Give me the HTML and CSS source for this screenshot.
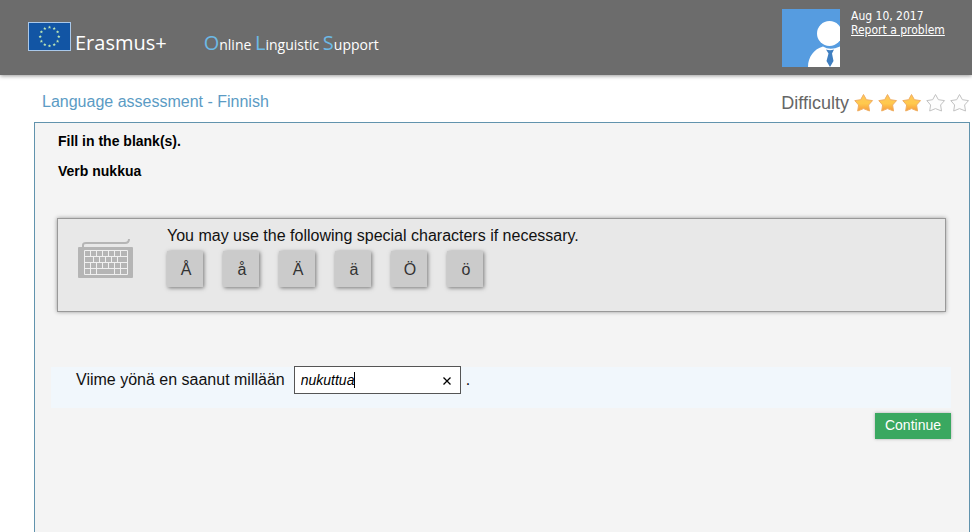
FILE: index.html
```html
<!DOCTYPE html>
<html lang="en">
<head>
  <meta charset="UTF-8">
  <title>Online Linguistic Support</title>
  <link rel="stylesheet" href="styles.css">
</head>
<body>

  <header class="top-bar">
    <svg class="flag" viewBox="0 0 43 29">
      <defs>
        <path id="eu-star" fill="#b9e3b4" d="M0-1.6 .5-.5 1.6-.4 .8 .4 1 1.5 0 .9-1 1.5-.8 .4-1.6-.4-.5-.5z"/>
      </defs>
      <rect x=".5" y=".5" width="42" height="28" fill="#1255a4" stroke="#a9c8ea"/>
      <use href="#eu-star" x="21.5" y="5.2"/>
      <use href="#eu-star" x="26.2" y="6.4"/>
      <use href="#eu-star" x="29.6" y="9.8"/>
      <use href="#eu-star" x="30.8" y="14.5"/>
      <use href="#eu-star" x="29.6" y="19.2"/>
      <use href="#eu-star" x="26.2" y="22.6"/>
      <use href="#eu-star" x="21.5" y="23.8"/>
      <use href="#eu-star" x="16.8" y="22.6"/>
      <use href="#eu-star" x="13.4" y="19.2"/>
      <use href="#eu-star" x="12.2" y="14.5"/>
      <use href="#eu-star" x="13.4" y="9.8"/>
      <use href="#eu-star" x="16.8" y="6.4"/>
    </svg>
    <span class="brand">Erasmus+</span>
    <span class="site-name"><b>O</b>nline <b>L</b>inguistic <b>S</b>upport</span>

    <div class="account">
      <svg class="avatar" viewBox="0 0 58 58">
        <rect width="58" height="58" fill="#569ce0"/>
        <circle cx="47.500" cy="24.500" r="12.500" fill="#fff"/>
        <path fill="#fff" d="M26 58C26 48 32 40 41 37.500Q48 42 58 37.500V58z"/>
        <path fill="#3f7fc1" d="M44 40.500Q48 42 52 40.500L50 44.500 51.500 52 48 58 44.500 52 46.500 44.500z"/>
      </svg>
      <div class="account-info">
        <span>Aug 10, 2017</span>
        <a href="#">Report a problem</a>
      </div>
    </div>
  </header>

  <main>
    <div class="title-row">
      <h1>Language assessment - Finnish</h1>
      <div class="difficulty">
        <span>Difficulty</span>
        <svg class="stars" viewBox="0 0 116 20">
          <defs>
            <linearGradient id="gold" x1="0" y1="0" x2="0" y2="1">
              <stop offset="0" stop-color="#ffc85a"/>
              <stop offset=".55" stop-color="#ffc94d"/>
              <stop offset="1" stop-color="#f79a3c"/>
            </linearGradient>
            <path id="star" stroke-linejoin="round" d="M9.500 1.500 12.400 6.700 18.500 7.600 14.600 12 15.500 18 9.500 15.600 3.700 18 4.600 12 .8 7.600 6.700 6.700z"/>
          </defs>
          <g fill="url(#gold)" stroke="#f0ae62">
            <use href="#star"/>
            <use href="#star" x="24"/>
            <use href="#star" x="48"/>
          </g>
          <g fill="#fdfdfd" stroke="#c2c2c2">
            <use href="#star" x="72"/>
            <use href="#star" x="96"/>
          </g>
        </svg>
      </div>
    </div>

    <form class="panel" onsubmit="return false">
      <h2>Fill in the blank(s).</h2>
      <h2>Verb nukkua</h2>

      <!-- Special characters -->
      <section class="keyboard-box">
        <svg class="keyboard" viewBox="0 0 56 40">
          <path d="M5 8V6Q5 4 8 4H47Q51 4 51 0" fill="none" stroke="#b5b5b5" stroke-width="2"/>
          <rect y="8" width="55" height="31" rx="1" fill="#b5b5b5"/>
          <path fill="none" stroke="#f0f0f0" d="M6.500 11.500H49.500V35.500H6.500zM6.500 17.500H49.500M6.500 23.500H49.500M6.500 29.500H49.500M12.500 11.500V17.500M18.500 11.500V17.500M24.500 11.500V17.500M30.500 11.500V17.500M36.500 11.500V17.500M42.500 11.500V17.500M15.500 17.500V23.500M21.500 17.500V23.500M27.500 17.500V23.500M33.500 17.500V23.500M39.500 17.500V23.500M12.500 23.500V29.500M18.500 23.500V29.500M24.500 23.500V29.500M30.500 23.500V29.500M36.500 23.500V29.500M42.500 23.500V29.500M12.500 29.500V35.500M18.500 29.500V35.500M36.500 29.500V35.500M42.500 29.500V35.500"/>
        </svg>
        <div>
          <p>You may use the following special characters if necessary.</p>
          <div class="keys">
            <button type="button">Å</button>
            <button type="button">å</button>
            <button type="button">Ä</button>
            <button type="button">ä</button>
            <button type="button">Ö</button>
            <button type="button">ö</button>
          </div>
        </div>
      </section>

      <!-- Question -->
      <div class="question">
        <label for="answer">Viime yönä en saanut millään</label>
        <div class="answer-box">
          <input type="text" id="answer" value="nukuttua" autocomplete="off" spellcheck="false">
          <span class="caret"></span>
          <button type="button" class="clear" aria-label="Clear">
            <svg viewBox="0 0 8 8"><path d="M.5 .5 7.500 7.500M7.500 .5 .5 7.500" stroke="#000" stroke-width="1.300"/></svg>
          </button>
        </div>
        <span>.</span>
      </div>

      <button type="submit" class="continue">Continue</button>
    </form>
  </main>

  <script>
    const answer = document.getElementById('answer');

    document.querySelectorAll('.keys button').forEach(key => {
      key.addEventListener('click', () => {
        answer.value += key.textContent;
        answer.focus();
      });
    });

    document.querySelector('.clear').addEventListener('click', () => {
      answer.value = '';
      answer.focus();
    });

    // The real caret takes over once the field is in use
    answer.addEventListener('focus', () => {
      document.querySelector('.caret').hidden = true;
    });
  </script>

</body>
</html>
```
FILE: styles.css
```css
* {
  box-sizing: border-box;
}

body {
  margin: 0;
  min-height: 100vh;
  display: flex;
  flex-direction: column;
  font-family: "Liberation Sans", Arial, sans-serif;
  font-size: 16px;
  color: #111;
  background: white;
}

.top-bar {
  display: flex;
  align-items: flex-start;
  height: 75px;
  padding-left: 28px;
  color: white;
  background: #6c6c6c;
  box-shadow: 0 1px 4px #999;
}

.flag {
  width: 43px;
  height: 29px;
  margin-top: 22px;
}

.brand {
  margin: 28px 0 0 4px;
  font: 20px/30px "Open Sans", sans-serif;
}

.site-name {
  margin: 28px 0 0 37px;
  font: 14px/30px "Open Sans", sans-serif;
}

.site-name b {
  font-size: 20px;
  font-weight: normal;
  color: #6cb9e6;
}

.account {
  display: flex;
  gap: 11px;
  width: 190px;
  margin: 9px 0 0 auto;
}

.avatar {
  width: 58px;
  height: 58px;
}

.account-info {
  display: flex;
  flex-direction: column;
  font: 12px/14px "DejaVu Sans Condensed", sans-serif;
}

.account-info a {
  color: white;
}

main {
  flex: 1;
  display: flex;
  flex-direction: column;
  padding: 16px 2px 0 34px;
}

.title-row {
  display: flex;
  justify-content: space-between;
  height: 31px;
  padding-left: 8px;
}

h1 {
  margin: 0;
  font-size: 16px;
  line-height: 22px;
  font-weight: normal;
  color: #5b9bc4;
}

.difficulty {
  display: flex;
  gap: 5px;
  font-size: 18px;
  line-height: 24px;
  color: #666;
}

.stars {
  width: 116px;
  height: 20px;
  margin-top: 2px;
}

.panel {
  flex: 1;
  display: flex;
  flex-direction: column;
  padding: 8px 18px 24px 16px;
  background: #f4f4f4;
  border: 1px solid #6193ad;
  border-bottom: none;
}

h2 {
  margin: 0 0 10px 7px;
  font-size: 14px;
  line-height: 20px;
  color: black;
}

.keyboard-box {
  display: flex;
  gap: 33px;
  margin: 27px 5px 0 6px;
  min-height: 94px;
  padding: 8px 20px;
  background: #e8e8e8;
  border: 1px solid #999;
  box-shadow: 0 0 4px #999;
}

.keyboard {
  width: 56px;
  height: 40px;
  margin-top: 12px;
}

.keyboard-box p {
  margin: 0 0 6px;
  line-height: 18px;
}

.keys {
  display: flex;
  gap: 20px;
}

.keys button {
  width: 36px;
  height: 36px;
  padding: 2px 0 0 2px;
  font: inherit;
  color: #333;
  background: #cbcbcb;
  border: none;
  box-shadow: 1px 1px 4px #777;
}

.question {
  display: flex;
  height: 41px;
  margin-top: 55px;
  padding-left: 25px;
  line-height: 26px;
  background: #f1f7fc;
}

.answer-box {
  position: relative;
  margin: -1px 5px 0 9px;
}

.answer-box input {
  width: 167px;
  height: 28px;
  padding: 0 24px 0 6px;
  font: italic 14px "Liberation Sans", Arial, sans-serif;
  color: black;
  background: white;
  border: 1px solid #555;
  border-radius: 0;
}

.caret {
  position: absolute;
  top: 6px;
  left: 60px;
  width: 1px;
  height: 16px;
  background: black;
}

.clear {
  position: absolute;
  top: 7px;
  right: 6px;
  display: flex;
  align-items: center;
  justify-content: center;
  width: 16px;
  height: 16px;
  padding: 0;
  background: none;
  border: none;
}

.clear svg {
  width: 8px;
  height: 8px;
}

.continue {
  align-self: flex-end;
  height: 26px;
  margin-top: 5px;
  padding: 0 10px 2px;
  font: 14px "Liberation Sans", Arial, sans-serif;
  color: white;
  background: #3aa860;
  border: none;
  box-shadow: 0 0 3px #aaa;
}
```
